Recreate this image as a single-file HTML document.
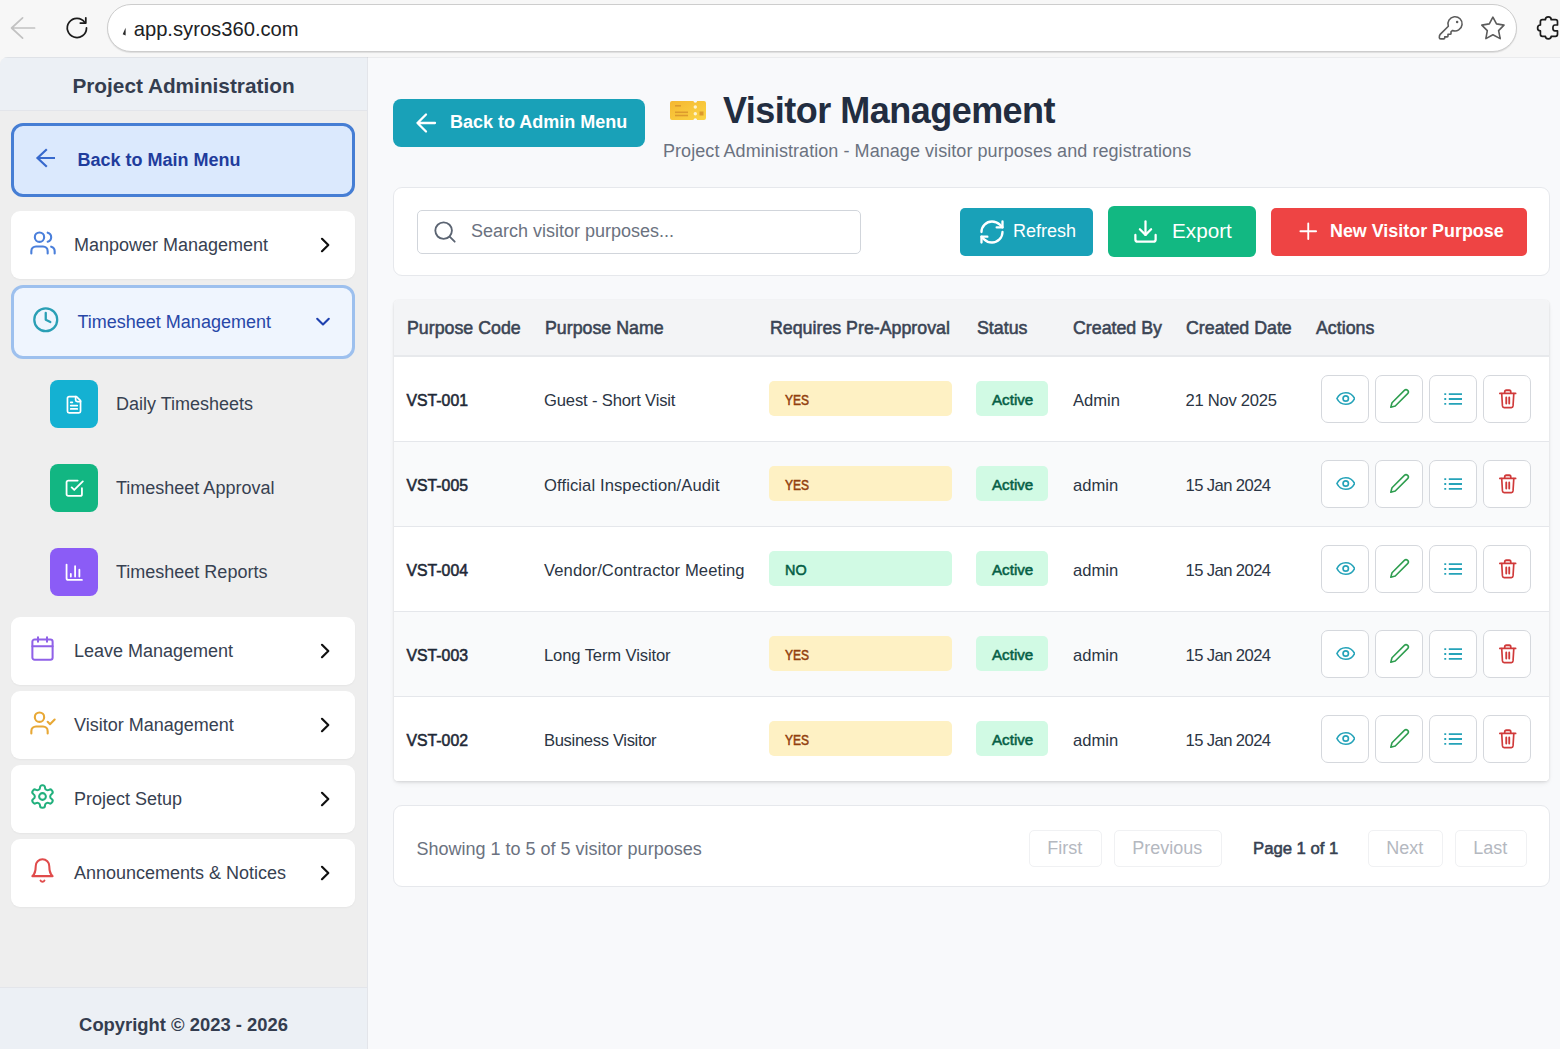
<!DOCTYPE html>
<html lang="en">
<head>
<meta charset="utf-8">
<title>Visitor Management</title>
<style>
*{box-sizing:border-box;margin:0;padding:0}
html,body{width:1560px;height:1049px;overflow:hidden}
body{position:relative;background:#f7f7f7;font-family:"Liberation Sans",sans-serif;color:#1f2937}
.abs{position:absolute}
svg{display:block}
/* ---------- browser chrome ---------- */
#chrome{position:absolute;left:0;top:0;width:1560px;height:57px;background:#f7f7f7}
#urlbar{position:absolute;left:107px;top:4px;width:1410px;height:47.500px;border-radius:24px;background:#fff;border:1px solid #cdcdcd;box-shadow:0 1px 1px rgba(0,0,0,.10)}
#url{position:absolute;left:133.700px;top:15.700px;font-size:20.200px;line-height:26px;color:#202124;white-space:nowrap}
/* ---------- page ---------- */
#page{position:absolute;left:0;top:57px;width:1560px;height:992px;background:#f8f9fb;border-top-left-radius:8px;overflow:hidden}
/* ---------- sidebar ---------- */
#side{position:absolute;left:0;top:0;width:368px;height:992px;background:#eeeeee;border-right:1px solid #e3e5ea}
#sidehead{position:absolute;left:0;top:0;width:367px;height:54px;background:#ecf0f5;border-bottom:1px solid #e3e5ea}
#sidehead span{position:absolute;left:0;width:367px;top:16px;text-align:center;font-weight:700;font-size:20.800px;line-height:26px;color:#343d4f;white-space:nowrap}
#sidefoot{position:absolute;left:0;top:930px;width:367px;height:62px;background:#ecf0f5;border-top:1px solid #e3e5ea}
#sidefoot span{position:absolute;left:0;width:367px;top:25px;text-align:center;font-weight:700;font-size:18.400px;line-height:24px;color:#343d4f;white-space:nowrap}
.mi{position:absolute;left:11px;width:344px;background:#fff;border-radius:9px;box-shadow:0 1px 2px rgba(0,0,0,.04)}
.mi .lbl{position:absolute;left:63px;top:0;font-size:18px;color:#374151;white-space:nowrap}
.mi .ico{position:absolute;left:17px}
.mi .chev{position:absolute;left:308px}
.sub .box{position:absolute;left:50px;width:48px;height:48px;border-radius:8px}
.sub .lbl{position:absolute;left:116px;font-size:18px;color:#374151;white-space:nowrap}
#backmain{position:absolute;left:11px;top:66px;width:344px;height:74px;border:3px solid #467ed4;border-radius:12px;background:#dbe9fd}
#backmain span{position:absolute;left:63.500px;top:-.500px;line-height:68px;font-weight:700;font-size:18px;color:#1f3c9c;white-space:nowrap}
#tsm{position:absolute;left:11px;top:227.700px;width:344px;height:74px;border:3px solid #9dc0ee;border-radius:12px;background:#eff5fe}
#tsm .lbl{position:absolute;left:63.500px;top:.600px;line-height:68px;font-size:18px;color:#2747a8;white-space:nowrap}
#tsm .ico{position:absolute}
/* ---------- main ---------- */
#main{position:absolute;left:0;top:0;width:1560px;height:992px}
#backadmin{position:absolute;left:393px;top:42px;width:252px;height:48px;border-radius:8px;background:#19a1b8}
#backadmin span{position:absolute;left:57px;top:0;line-height:46px;font-weight:700;font-size:18px;color:#fff;white-space:nowrap}
#title{position:absolute;left:723px;top:31.500px;font-size:36px;line-height:44px;letter-spacing:-.520px;font-weight:700;color:#222d40;white-space:nowrap}
#subtitle{position:absolute;left:663px;top:82px;letter-spacing:.060px;font-size:18px;line-height:24px;color:#6b7280;white-space:nowrap}
#toolbar{position:absolute;left:393px;top:130px;width:1157px;height:89px;background:#fff;border:1px solid #e6e8ec;border-radius:9px}
#search{position:absolute;left:23px;top:22px;width:444px;height:44px;border:1px solid #d1d5db;border-radius:5px;background:#fff}
#search span{position:absolute;left:53px;top:0;line-height:41px;font-size:18px;color:#6b7280;white-space:nowrap}
#btnref{position:absolute;left:566px;top:20px;width:133px;height:48px;border-radius:5px;background:#19a1b8}
#btnref span{position:absolute;left:53px;top:1px;line-height:45px;font-size:18px;color:#fff;white-space:nowrap}
#btnexp{position:absolute;left:714px;top:18px;width:148px;height:51px;border-radius:6px;background:#12b882}
#btnexp span{position:absolute;left:64px;top:-1px;line-height:51px;font-size:20.700px;color:#fff;white-space:nowrap}
#btnnew{position:absolute;left:877px;top:20px;width:256px;height:48px;border-radius:5px;background:#ee4444}
#btnnew span{position:absolute;left:59px;top:1px;line-height:45px;font-weight:700;font-size:17.900px;color:#fff;white-space:nowrap}
#table{position:absolute;left:394px;top:243px;width:1155px;height:481px;background:#fff;border-radius:4px;box-shadow:0 3px 6px -2px rgba(0,0,0,.10),0 1px 3px rgba(0,0,0,.09),0 0 1px rgba(0,0,0,.10);overflow:hidden}
#thead{position:absolute;left:0;top:0;width:1155px;height:57px;background:#f3f4f6;border-bottom:2.500px solid #e7e9ec}
#thead span{position:absolute;top:14.800px;line-height:26px;font-size:17.800px;font-weight:400;-webkit-text-stroke:.550px #3a4454;color:#3a4454;white-space:nowrap}
.tr{position:absolute;left:0;width:1155px;height:85px;background:#fff;border-bottom:1px solid #e5e7eb}
.tr.alt{background:#f9fafb}
.tr.last{height:84px;border-bottom:none}
.tr .c{position:absolute;top:30.600px;line-height:26px;font-size:16.600px;color:#2b3544;white-space:nowrap}
.tr .code{left:12.500px;font-weight:400;font-size:15.800px;top:30.900px;-webkit-text-stroke:.550px #1f2937;color:#1f2937}
.tr .name{left:150px}
.tr .by{left:679px}
.tr .dt{left:791.500px}
.bd{position:absolute;top:24px;height:35px;border-radius:5px}
.bd b{position:absolute;top:.800px;line-height:35px;font-size:15px;font-weight:400;white-space:nowrap;display:inline-block;transform-origin:0 50%}
.bd.yes{left:375px;width:183px;background:#fef1c4} .bd.yes b{left:15.500px;color:#92400e;-webkit-text-stroke:.550px #92400e;transform:scaleX(.800)}
.bd.no{left:375px;width:183px;background:#d1fae4} .bd.no b{left:16px;color:#065f46;-webkit-text-stroke:.550px #065f46;transform:scaleX(.960)}
.bd.act{left:582px;width:72px;background:#d1fae4} .bd.act b{left:15.500px;color:#065f46;-webkit-text-stroke:.550px #065f46;transform:scaleX(1.010)}
.ab{position:absolute;top:18px;width:47.500px;height:47.500px;border:1px solid #d5d8dd;border-radius:7px;background:#fff}
#pager{position:absolute;left:393px;top:748px;width:1157px;height:82px;background:#fff;border:1px solid #e6e8ec;border-radius:9px}
#showing{position:absolute;left:22.500px;top:31px;line-height:24px;font-size:18px;color:#6b7280;white-space:nowrap}
.pb{position:absolute;top:23.500px;height:37px;text-indent:-1px;border:1px solid #f0f1f3;border-radius:5px;text-align:center;line-height:34px;font-size:18px;color:#b4b8bf;white-space:nowrap}
#pageof{position:absolute;left:859px;top:30.500px;line-height:24px;font-size:16.700px;font-weight:400;-webkit-text-stroke:.550px #374151;color:#374151;white-space:nowrap}
</style>
</head>
<body>
<div id="chrome">
  <svg class="abs" style="left:0;top:8px" width="130" height="40" viewBox="0 0 130 40" fill="none" stroke-linecap="round" stroke-linejoin="round"><path d="M34.600 20H11.600M22.600 9.900L11.600 20l11 10.100" stroke="#c2c2c2" stroke-width="1.700"/><path d="M86.500 19.900A9.600 9.600 0 1 1 84.760 14.400" stroke="#1c1c1c" stroke-width="1.750"/><path d="M85.800 9.800V15H80.300" stroke="#1c1c1c" stroke-width="1.750"/></svg>
  <div id="urlbar"></div>
  <svg class="abs" style="left:121.500px;top:27px" width="5" height="9" viewBox="0 0 5 9"><path d="M3.600 0.800L0.700 7.200L3.600 8.400Z" fill="#2a2a2a"/></svg>
  <div id="url">app.syros360.com</div>
  <svg class="abs" style="left:1430px;top:8px" width="130" height="40" viewBox="0 0 130 40" fill="none" stroke-linecap="round" stroke-linejoin="round"><path d="M22.570 22.470A7.100 7.100 0 1 0 18.330 18.230L10.200 26.400C9.400 27.300 9.300 28.500 9.300 29.400C9.300 30.400 9.900 30.900 10.800 30.900H13.800C14.400 30.900 14.700 30.500 14.700 30V28.900H17.200C17.700 28.900 18 28.600 18 28.100V26.300H20.200C20.700 26.300 21 26 21 25.500V23.800Z" stroke="#5c5c5c" stroke-width="1.600"/><circle cx="27.100" cy="14" r="1.250" fill="#5c5c5c"/><path d="M62.900 9.100L66.500 15.900L74 17.100L68.600 22.600L70.200 30.600L62.900 26.800L55.900 30.600L57.300 22.600L51.800 17.100L59.300 15.900Z" stroke="#5c5c5c" stroke-width="1.600"/><path d="M112.400 11.700H115.400C115.400 9.700 116.400 8.800 118.300 8.800C120.200 8.800 121.200 9.700 121.200 11.700H125.500Q127.500 11.700 127.500 13.700V17H124.900C123.600 17 122.900 18.100 122.900 20C122.900 21.900 123.600 22.900 124.900 22.900H127.500V26.300Q127.500 28.300 125.500 28.300H121.200C121.200 30.300 120.200 30.800 118.300 30.800C116.400 30.800 115.400 30.300 115.400 28.300H112.400Q110.400 28.300 110.400 26.300V22.900C108.600 22.900 107.600 21.900 107.600 20C107.600 18.100 108.600 17 110.400 17V13.700Q110.400 11.700 112.400 11.700Z" stroke="#1c1c1c" stroke-width="1.700"/></svg>
</div>
<div id="page">
  <div id="side">
    <div id="sidehead"><span>Project Administration</span></div>
    <div id="backmain"><svg class="abs" style="left:21.300px;top:20.500px" width="22" height="22" viewBox="0 0 22 22" fill="none" stroke="#3769cd" stroke-width="2.200" stroke-linecap="butt" stroke-linejoin="miter"><path d="M20 11H2.500M11.800 2.300L2.500 11l9.300 8.700"/></svg><span>Back to Main Menu</span></div>
    <div class="mi" style="top:154px;height:68px"><svg class="ico" style="top:17.500px;left:17.500px" width="28" height="28" viewBox="0 0 24 24" fill="none" stroke="#4a7fdb" stroke-width="1.8" stroke-linecap="round" stroke-linejoin="round"><path d="M16 21v-2a4 4 0 0 0-4-4H6a4 4 0 0 0-4 4v2"/><circle cx="9" cy="7" r="4"/><path d="M22 21v-2a4 4 0 0 0-3-3.870"/><path d="M16 3.130a4 4 0 0 1 0 7.750"/></svg><span class="lbl" style="line-height:68px">Manpower Management</span><svg class="chev" style="top:25px" width="12" height="18" viewBox="0 0 12 18" fill="none" stroke="#111" stroke-width="2.200" stroke-linecap="round" stroke-linejoin="round"><path d="M3 2.800L9.300 9l-6.300 6.200"/></svg></div>
    <div id="tsm"><svg class="ico" style="top:18.300px;left:18.300px" width="27.500" height="27.500" viewBox="0 0 24 24" fill="none" stroke="#2a9fb5" stroke-width="2" stroke-linecap="round" stroke-linejoin="round"><circle cx="12" cy="12" r="10"/><path d="M12 6v6l4 2"/></svg><span class="lbl">Timesheet Management</span><svg class="abs" style="left:299.500px;top:28.500px" width="18" height="12" viewBox="0 0 18 12" fill="none" stroke="#1e40af" stroke-width="2.100" stroke-linecap="round" stroke-linejoin="round"><path d="M3.200 2.800L9 8.500l5.800-5.700"/></svg></div>
    <div class="sub"><div class="box" style="top:323px;background:#14b1d2"><svg class="abs" style="left:14px;top:14.600px" width="20" height="19.600" viewBox="0 0 24 24" fill="none" stroke="#fff" stroke-width="2.100" stroke-linecap="round" stroke-linejoin="round"><path d="M15 2H6a2 2 0 0 0-2 2v16a2 2 0 0 0 2 2h12a2 2 0 0 0 2-2V7z"/><path d="M14 2v4a2 2 0 0 0 2 2h4M10 9H8M16 13H8M16 17H8"/></svg></div><span class="lbl" style="top:323px;line-height:48px">Daily Timesheets</span></div>
    <div class="sub"><div class="box" style="top:407px;background:#12b682"><svg class="abs" style="left:13.800px;top:14px" width="20.500" height="20.500" viewBox="0 0 24 24" fill="none" stroke="#fff" stroke-width="2.100" stroke-linecap="round" stroke-linejoin="round"><path d="M9 11l3 3L22 4"/><path d="M21 12v7a2 2 0 0 1-2 2H5a2 2 0 0 1-2-2V5a2 2 0 0 1 2-2h11"/></svg></div><span class="lbl" style="top:407px;line-height:48px">Timesheet Approval</span></div>
    <div class="sub"><div class="box" style="top:491px;background:#8b5cf6"><svg class="abs" style="left:13.800px;top:14px" width="20.500" height="20.500" viewBox="0 0 24 24" fill="none" stroke="#fff" stroke-width="2.100" stroke-linecap="round" stroke-linejoin="round"><path d="M3 3v16a2 2 0 0 0 2 2h16"/><path d="M18 17V9M13 17V5M8 17v-3"/></svg></div><span class="lbl" style="top:491px;line-height:48px">Timesheet Reports</span></div>
    <div class="mi" style="top:560px;height:68px"><svg class="ico" style="top:17.500px;left:18px" width="27" height="27" viewBox="0 0 24 24" fill="none" stroke="#9061e8" stroke-width="1.8" stroke-linecap="round" stroke-linejoin="round"><rect x="3" y="4" width="18" height="18" rx="2"/><path d="M16 2v4M8 2v4M3 10h18"/></svg><span class="lbl" style="line-height:68px">Leave Management</span><svg class="chev" style="top:25px" width="12" height="18" viewBox="0 0 12 18" fill="none" stroke="#111" stroke-width="2.200" stroke-linecap="round" stroke-linejoin="round"><path d="M3 2.800L9.300 9l-6.300 6.200"/></svg></div>
    <div class="mi" style="top:634px;height:68px"><svg class="ico" style="top:17.500px;left:17.500px" width="28" height="28" viewBox="0 0 24 24" fill="none" stroke="#e8a835" stroke-width="1.8" stroke-linecap="round" stroke-linejoin="round"><path d="M16 21v-2a4 4 0 0 0-4-4H6a4 4 0 0 0-4 4v2"/><circle cx="9" cy="7" r="4"/><path d="M16 11l2 2 4-4"/></svg><span class="lbl" style="line-height:68px">Visitor Management</span><svg class="chev" style="top:25px" width="12" height="18" viewBox="0 0 12 18" fill="none" stroke="#111" stroke-width="2.200" stroke-linecap="round" stroke-linejoin="round"><path d="M3 2.800L9.300 9l-6.300 6.200"/></svg></div>
    <div class="mi" style="top:708px;height:68px"><svg class="ico" style="top:18px;left:18px" width="27" height="27" viewBox="0 0 24 24" fill="none" stroke="#22b07d" stroke-width="1.8" stroke-linecap="round" stroke-linejoin="round"><path d="M12.220 2h-.440a2 2 0 0 0-2 2v.180a2 2 0 0 1-1 1.730l-.430.250a2 2 0 0 1-2 0l-.150-.080a2 2 0 0 0-2.730.730l-.220.380a2 2 0 0 0 .730 2.730l.150.100a2 2 0 0 1 1 1.720v.510a2 2 0 0 1-1 1.740l-.150.090a2 2 0 0 0-.730 2.730l.220.380a2 2 0 0 0 2.730.730l.150-.080a2 2 0 0 1 2 0l.430.250a2 2 0 0 1 1 1.730V20a2 2 0 0 0 2 2h.440a2 2 0 0 0 2-2v-.180a2 2 0 0 1 1-1.730l.430-.250a2 2 0 0 1 2 0l.150.080a2 2 0 0 0 2.730-.730l.220-.390a2 2 0 0 0-.730-2.730l-.150-.080a2 2 0 0 1-1-1.740v-.500a2 2 0 0 1 1-1.740l.150-.090a2 2 0 0 0 .730-2.730l-.220-.380a2 2 0 0 0-2.730-.730l-.150.080a2 2 0 0 1-2 0l-.430-.250a2 2 0 0 1-1-1.730V4a2 2 0 0 0-2-2z"/><circle cx="12" cy="12" r="3"/></svg><span class="lbl" style="line-height:68px">Project Setup</span><svg class="chev" style="top:25px" width="12" height="18" viewBox="0 0 12 18" fill="none" stroke="#111" stroke-width="2.200" stroke-linecap="round" stroke-linejoin="round"><path d="M3 2.800L9.300 9l-6.300 6.200"/></svg></div>
    <div class="mi" style="top:782px;height:68px"><svg class="ico" style="top:18px;left:18px" width="27" height="27" viewBox="0 0 24 24" fill="none" stroke="#e04b4b" stroke-width="1.8" stroke-linecap="round" stroke-linejoin="round"><path d="M6 8a6 6 0 0 1 12 0c0 7 3 9 3 9H3s3-2 3-9"/><path d="M10.300 21a1.940 1.940 0 0 0 3.400 0"/></svg><span class="lbl" style="line-height:68px">Announcements &amp; Notices</span><svg class="chev" style="top:25px" width="12" height="18" viewBox="0 0 12 18" fill="none" stroke="#111" stroke-width="2.200" stroke-linecap="round" stroke-linejoin="round"><path d="M3 2.800L9.300 9l-6.300 6.200"/></svg></div>
    <div id="sidefoot"><span>Copyright © 2023 - 2026</span></div>
  </div>
  <div class="abs" style="left:0;top:0;width:1560px;height:1px;background:rgba(0,0,0,.055);z-index:5"></div>
  <div id="main">
    <div id="backadmin"><svg class="abs" style="left:22px;top:13px" width="22" height="22" viewBox="0 0 22 22" fill="none" stroke="#fff" stroke-width="2.300" stroke-linecap="round" stroke-linejoin="round"><path d="M20 11H2.500M11 2.500L2.500 11l8.500 8.500"/></svg><span>Back to Admin Menu</span></div>
    <svg class="abs" style="left:670px;top:44px" width="36" height="19" viewBox="0 0 36 19"><defs><linearGradient id="tg" x1="0" y1="0" x2="1" y2="1"><stop offset="0" stop-color="#f5b731"/><stop offset="1" stop-color="#fbd545"/></linearGradient></defs><path d="M2 0h21.500a1.800 1.800 0 0 0 3.600 0H34a2 2 0 0 1 2 2v15a2 2 0 0 1-2 2h-6.900a1.800 1.800 0 0 0-3.600 0H2a2 2 0 0 1-2-2V2a2 2 0 0 1 2-2z" fill="url(#tg)"/><circle cx="25.300" cy="6" r="1.700" fill="#fdf3cf"/><circle cx="25.300" cy="12.800" r="1.700" fill="#fdf3cf"/><rect x="5" y="4" width="6" height="1.600" fill="#dc9a2d"/><rect x="5" y="10.500" width="13" height="1.600" fill="#dc9a2d"/><rect x="5" y="13.700" width="13" height="1.600" fill="#dc9a2d"/><rect x="29.500" y="10.500" width="4" height="4" fill="#dc9a2d"/></svg>
    <div id="title">Visitor Management</div>
    <div id="subtitle">Project Administration - Manage visitor purposes and registrations</div>

    <div id="toolbar">
      <div id="search"><svg class="abs" style="left:15px;top:8.500px" width="24" height="24" viewBox="0 0 26 26" fill="none" stroke="#5b6472" stroke-width="2" stroke-linecap="round"><circle cx="11.500" cy="11.500" r="9"/><path d="M18.300 18.300l5.200 5.200"/></svg><span>Search visitor purposes...</span></div>
      <div id="btnref"><svg class="abs" style="left:17.500px;top:9.500px" width="28" height="28" viewBox="0 0 24 24" fill="none" stroke="#fff" stroke-width="2" stroke-linecap="round" stroke-linejoin="round"><path d="M3 12a9 9 0 0 1 9-9 9.750 9.750 0 0 1 6.740 2.740L21 8"/><path d="M21 3v5h-5"/><path d="M21 12a9 9 0 0 1-9 9 9.750 9.750 0 0 1-6.740-2.740L3 16"/><path d="M8 16H3v5"/></svg><span>Refresh</span></div>
      <div id="btnexp"><svg class="abs" style="left:23.500px;top:12px" width="27" height="27" viewBox="0 0 24 24" fill="none" stroke="#fff" stroke-width="2" stroke-linecap="round" stroke-linejoin="round"><path d="M21 15v4a2 2 0 0 1-2 2H5a2 2 0 0 1-2-2v-4"/><path d="M7 10l5 5 5-5"/><path d="M12 15V3"/></svg><span>Export</span></div>
      <div id="btnnew"><svg class="abs" style="left:27.500px;top:14px" width="18.500" height="18.500" viewBox="0 0 20 20" fill="none" stroke="#fff" stroke-width="2" stroke-linecap="round"><path d="M10 1.500v17M1.500 10h17"/></svg><span>New Visitor Purpose</span></div>
    </div>

    <div id="table">
      <div id="thead">
        <span style="left:13px">Purpose Code</span><span style="left:151px">Purpose Name</span><span style="left:376px">Requires Pre-Approval</span><span style="left:583px">Status</span><span style="left:679px">Created By</span><span style="left:792px">Created Date</span><span style="left:922px">Actions</span>
      </div>
      <div class="tr" style="top:57px">
      <span class="c code">VST-001</span><span class="c name" style="letter-spacing:-0.16px">Guest - Short Visit</span>
      <span class="bd yes"><b>YES</b></span><span class="bd act"><b>Active</b></span>
      <span class="c by">Admin</span><span class="c dt" style="letter-spacing:-.26px">21 Nov 2025</span>
      <span class="ab" style="left:927px"><svg class="abs" style="left:13.500px;top:15px" width="19.500" height="15" viewBox="0 0 21 16" fill="none" stroke="#25a3b9" stroke-width="1.800" stroke-linejoin="round"><path d="M1 8C3 3.900 6.500 1.800 10.500 1.800S18 3.900 20 8c-2 4.100-5.500 6.200-9.500 6.200S3 12.100 1 8z"/><circle cx="10.500" cy="8" r="2.900"/></svg></span><span class="ab" style="left:981px"><svg class="abs" style="left:11.500px;top:12px" width="22" height="22" viewBox="0 0 22 22" fill="none" stroke="#2f9e50" stroke-width="1.600" stroke-linecap="round" stroke-linejoin="round"><path transform="translate(2.800,19.200) rotate(-45)" d="M0 0L4 -2.300H21.500a2.300 2.300 0 0 1 0 4.600H4Z"/></svg></span><span class="ab" style="left:1035px"><svg class="abs" style="left:13.300px;top:14.500px" width="20" height="16" viewBox="0 0 20 16" fill="none" stroke="#25a3b9" stroke-width="1.800"><path d="M5.800 3.200H19M5.800 8H19M5.800 12.800H19"/><path d="M1.300 3.200h1.900M1.300 8h1.900M1.300 12.800h1.900"/></svg></span><span class="ab" style="left:1089px"><svg class="abs" style="left:13.800px;top:11.500px" width="19.500" height="21.500" viewBox="0 0 21 22" preserveAspectRatio="none" fill="none" stroke="#d03a3a" stroke-width="1.800" stroke-linecap="round" stroke-linejoin="round"><path d="M2 5.500h17"/><path d="M7.200 5.200V4c0-1 .7-1.700 1.700-1.700h3.200c1 0 1.700.7 1.700 1.700v1.200"/><path d="M4 5.800l.8 12.500c.1 1 .8 1.700 1.800 1.700h7.800c1 0 1.700-.7 1.800-1.700L17 5.800"/><path d="M8.900 9.800v6M12.100 9.800v6" stroke-width="2"/></svg></span>
    </div><div class="tr alt" style="top:142px">
      <span class="c code">VST-005</span><span class="c name" style="letter-spacing:0.1px">Official Inspection/Audit</span>
      <span class="bd yes"><b>YES</b></span><span class="bd act"><b>Active</b></span>
      <span class="c by">admin</span><span class="c dt" style="letter-spacing:-.58px">15 Jan 2024</span>
      <span class="ab" style="left:927px"><svg class="abs" style="left:13.500px;top:15px" width="19.500" height="15" viewBox="0 0 21 16" fill="none" stroke="#25a3b9" stroke-width="1.800" stroke-linejoin="round"><path d="M1 8C3 3.900 6.500 1.800 10.500 1.800S18 3.900 20 8c-2 4.100-5.500 6.200-9.500 6.200S3 12.100 1 8z"/><circle cx="10.500" cy="8" r="2.900"/></svg></span><span class="ab" style="left:981px"><svg class="abs" style="left:11.500px;top:12px" width="22" height="22" viewBox="0 0 22 22" fill="none" stroke="#2f9e50" stroke-width="1.600" stroke-linecap="round" stroke-linejoin="round"><path transform="translate(2.800,19.200) rotate(-45)" d="M0 0L4 -2.300H21.500a2.300 2.300 0 0 1 0 4.600H4Z"/></svg></span><span class="ab" style="left:1035px"><svg class="abs" style="left:13.300px;top:14.500px" width="20" height="16" viewBox="0 0 20 16" fill="none" stroke="#25a3b9" stroke-width="1.800"><path d="M5.800 3.200H19M5.800 8H19M5.800 12.800H19"/><path d="M1.300 3.200h1.900M1.300 8h1.900M1.300 12.800h1.900"/></svg></span><span class="ab" style="left:1089px"><svg class="abs" style="left:13.800px;top:11.500px" width="19.500" height="21.500" viewBox="0 0 21 22" preserveAspectRatio="none" fill="none" stroke="#d03a3a" stroke-width="1.800" stroke-linecap="round" stroke-linejoin="round"><path d="M2 5.500h17"/><path d="M7.200 5.200V4c0-1 .7-1.700 1.700-1.700h3.200c1 0 1.700.7 1.700 1.700v1.200"/><path d="M4 5.800l.8 12.500c.1 1 .8 1.700 1.800 1.700h7.800c1 0 1.700-.7 1.800-1.700L17 5.800"/><path d="M8.900 9.800v6M12.100 9.800v6" stroke-width="2"/></svg></span>
    </div><div class="tr" style="top:227px">
      <span class="c code">VST-004</span><span class="c name" style="letter-spacing:0.09px">Vendor/Contractor Meeting</span>
      <span class="bd no"><b>NO</b></span><span class="bd act"><b>Active</b></span>
      <span class="c by">admin</span><span class="c dt" style="letter-spacing:-.58px">15 Jan 2024</span>
      <span class="ab" style="left:927px"><svg class="abs" style="left:13.500px;top:15px" width="19.500" height="15" viewBox="0 0 21 16" fill="none" stroke="#25a3b9" stroke-width="1.800" stroke-linejoin="round"><path d="M1 8C3 3.900 6.500 1.800 10.500 1.800S18 3.900 20 8c-2 4.100-5.500 6.200-9.500 6.200S3 12.100 1 8z"/><circle cx="10.500" cy="8" r="2.900"/></svg></span><span class="ab" style="left:981px"><svg class="abs" style="left:11.500px;top:12px" width="22" height="22" viewBox="0 0 22 22" fill="none" stroke="#2f9e50" stroke-width="1.600" stroke-linecap="round" stroke-linejoin="round"><path transform="translate(2.800,19.200) rotate(-45)" d="M0 0L4 -2.300H21.500a2.300 2.300 0 0 1 0 4.600H4Z"/></svg></span><span class="ab" style="left:1035px"><svg class="abs" style="left:13.300px;top:14.500px" width="20" height="16" viewBox="0 0 20 16" fill="none" stroke="#25a3b9" stroke-width="1.800"><path d="M5.800 3.200H19M5.800 8H19M5.800 12.800H19"/><path d="M1.300 3.200h1.900M1.300 8h1.900M1.300 12.800h1.900"/></svg></span><span class="ab" style="left:1089px"><svg class="abs" style="left:13.800px;top:11.500px" width="19.500" height="21.500" viewBox="0 0 21 22" preserveAspectRatio="none" fill="none" stroke="#d03a3a" stroke-width="1.800" stroke-linecap="round" stroke-linejoin="round"><path d="M2 5.500h17"/><path d="M7.200 5.200V4c0-1 .7-1.700 1.700-1.700h3.200c1 0 1.700.7 1.700 1.700v1.200"/><path d="M4 5.800l.8 12.500c.1 1 .8 1.700 1.800 1.700h7.800c1 0 1.700-.7 1.800-1.700L17 5.800"/><path d="M8.900 9.800v6M12.100 9.800v6" stroke-width="2"/></svg></span>
    </div><div class="tr alt" style="top:312px">
      <span class="c code">VST-003</span><span class="c name" style="letter-spacing:-0.12px">Long Term Visitor</span>
      <span class="bd yes"><b>YES</b></span><span class="bd act"><b>Active</b></span>
      <span class="c by">admin</span><span class="c dt" style="letter-spacing:-.58px">15 Jan 2024</span>
      <span class="ab" style="left:927px"><svg class="abs" style="left:13.500px;top:15px" width="19.500" height="15" viewBox="0 0 21 16" fill="none" stroke="#25a3b9" stroke-width="1.800" stroke-linejoin="round"><path d="M1 8C3 3.900 6.500 1.800 10.500 1.800S18 3.900 20 8c-2 4.100-5.500 6.200-9.500 6.200S3 12.100 1 8z"/><circle cx="10.500" cy="8" r="2.900"/></svg></span><span class="ab" style="left:981px"><svg class="abs" style="left:11.500px;top:12px" width="22" height="22" viewBox="0 0 22 22" fill="none" stroke="#2f9e50" stroke-width="1.600" stroke-linecap="round" stroke-linejoin="round"><path transform="translate(2.800,19.200) rotate(-45)" d="M0 0L4 -2.300H21.500a2.300 2.300 0 0 1 0 4.600H4Z"/></svg></span><span class="ab" style="left:1035px"><svg class="abs" style="left:13.300px;top:14.500px" width="20" height="16" viewBox="0 0 20 16" fill="none" stroke="#25a3b9" stroke-width="1.800"><path d="M5.800 3.200H19M5.800 8H19M5.800 12.800H19"/><path d="M1.300 3.200h1.900M1.300 8h1.900M1.300 12.800h1.900"/></svg></span><span class="ab" style="left:1089px"><svg class="abs" style="left:13.800px;top:11.500px" width="19.500" height="21.500" viewBox="0 0 21 22" preserveAspectRatio="none" fill="none" stroke="#d03a3a" stroke-width="1.800" stroke-linecap="round" stroke-linejoin="round"><path d="M2 5.500h17"/><path d="M7.200 5.200V4c0-1 .7-1.700 1.700-1.700h3.200c1 0 1.700.7 1.700 1.700v1.200"/><path d="M4 5.800l.8 12.500c.1 1 .8 1.700 1.800 1.700h7.800c1 0 1.700-.7 1.800-1.700L17 5.800"/><path d="M8.900 9.800v6M12.100 9.800v6" stroke-width="2"/></svg></span>
    </div><div class="tr last" style="top:397px">
      <span class="c code">VST-002</span><span class="c name" style="letter-spacing:-0.34px">Business Visitor</span>
      <span class="bd yes"><b>YES</b></span><span class="bd act"><b>Active</b></span>
      <span class="c by">admin</span><span class="c dt" style="letter-spacing:-.58px">15 Jan 2024</span>
      <span class="ab" style="left:927px"><svg class="abs" style="left:13.500px;top:15px" width="19.500" height="15" viewBox="0 0 21 16" fill="none" stroke="#25a3b9" stroke-width="1.800" stroke-linejoin="round"><path d="M1 8C3 3.900 6.500 1.800 10.500 1.800S18 3.900 20 8c-2 4.100-5.500 6.200-9.500 6.200S3 12.100 1 8z"/><circle cx="10.500" cy="8" r="2.900"/></svg></span><span class="ab" style="left:981px"><svg class="abs" style="left:11.500px;top:12px" width="22" height="22" viewBox="0 0 22 22" fill="none" stroke="#2f9e50" stroke-width="1.600" stroke-linecap="round" stroke-linejoin="round"><path transform="translate(2.800,19.200) rotate(-45)" d="M0 0L4 -2.300H21.500a2.300 2.300 0 0 1 0 4.600H4Z"/></svg></span><span class="ab" style="left:1035px"><svg class="abs" style="left:13.300px;top:14.500px" width="20" height="16" viewBox="0 0 20 16" fill="none" stroke="#25a3b9" stroke-width="1.800"><path d="M5.800 3.200H19M5.800 8H19M5.800 12.800H19"/><path d="M1.300 3.200h1.900M1.300 8h1.900M1.300 12.800h1.900"/></svg></span><span class="ab" style="left:1089px"><svg class="abs" style="left:13.800px;top:11.500px" width="19.500" height="21.500" viewBox="0 0 21 22" preserveAspectRatio="none" fill="none" stroke="#d03a3a" stroke-width="1.800" stroke-linecap="round" stroke-linejoin="round"><path d="M2 5.500h17"/><path d="M7.200 5.200V4c0-1 .7-1.700 1.700-1.700h3.200c1 0 1.700.7 1.700 1.700v1.200"/><path d="M4 5.800l.8 12.500c.1 1 .8 1.700 1.800 1.700h7.800c1 0 1.700-.7 1.800-1.700L17 5.800"/><path d="M8.900 9.800v6M12.100 9.800v6" stroke-width="2"/></svg></span>
    </div>
    </div>

    <div id="pager">
      <span id="showing">Showing 1 to 5 of 5 visitor purposes</span>
      <span class="pb" style="left:635px;width:72.500px">First</span><span class="pb" style="left:720px;width:107.500px">Previous</span>
      <span id="pageof">Page 1 of 1</span>
      <span class="pb" style="left:974px;width:74.500px">Next</span><span class="pb" style="left:1061px;width:71.500px">Last</span>
    </div>
  </div>
</div>
</body>
</html>
